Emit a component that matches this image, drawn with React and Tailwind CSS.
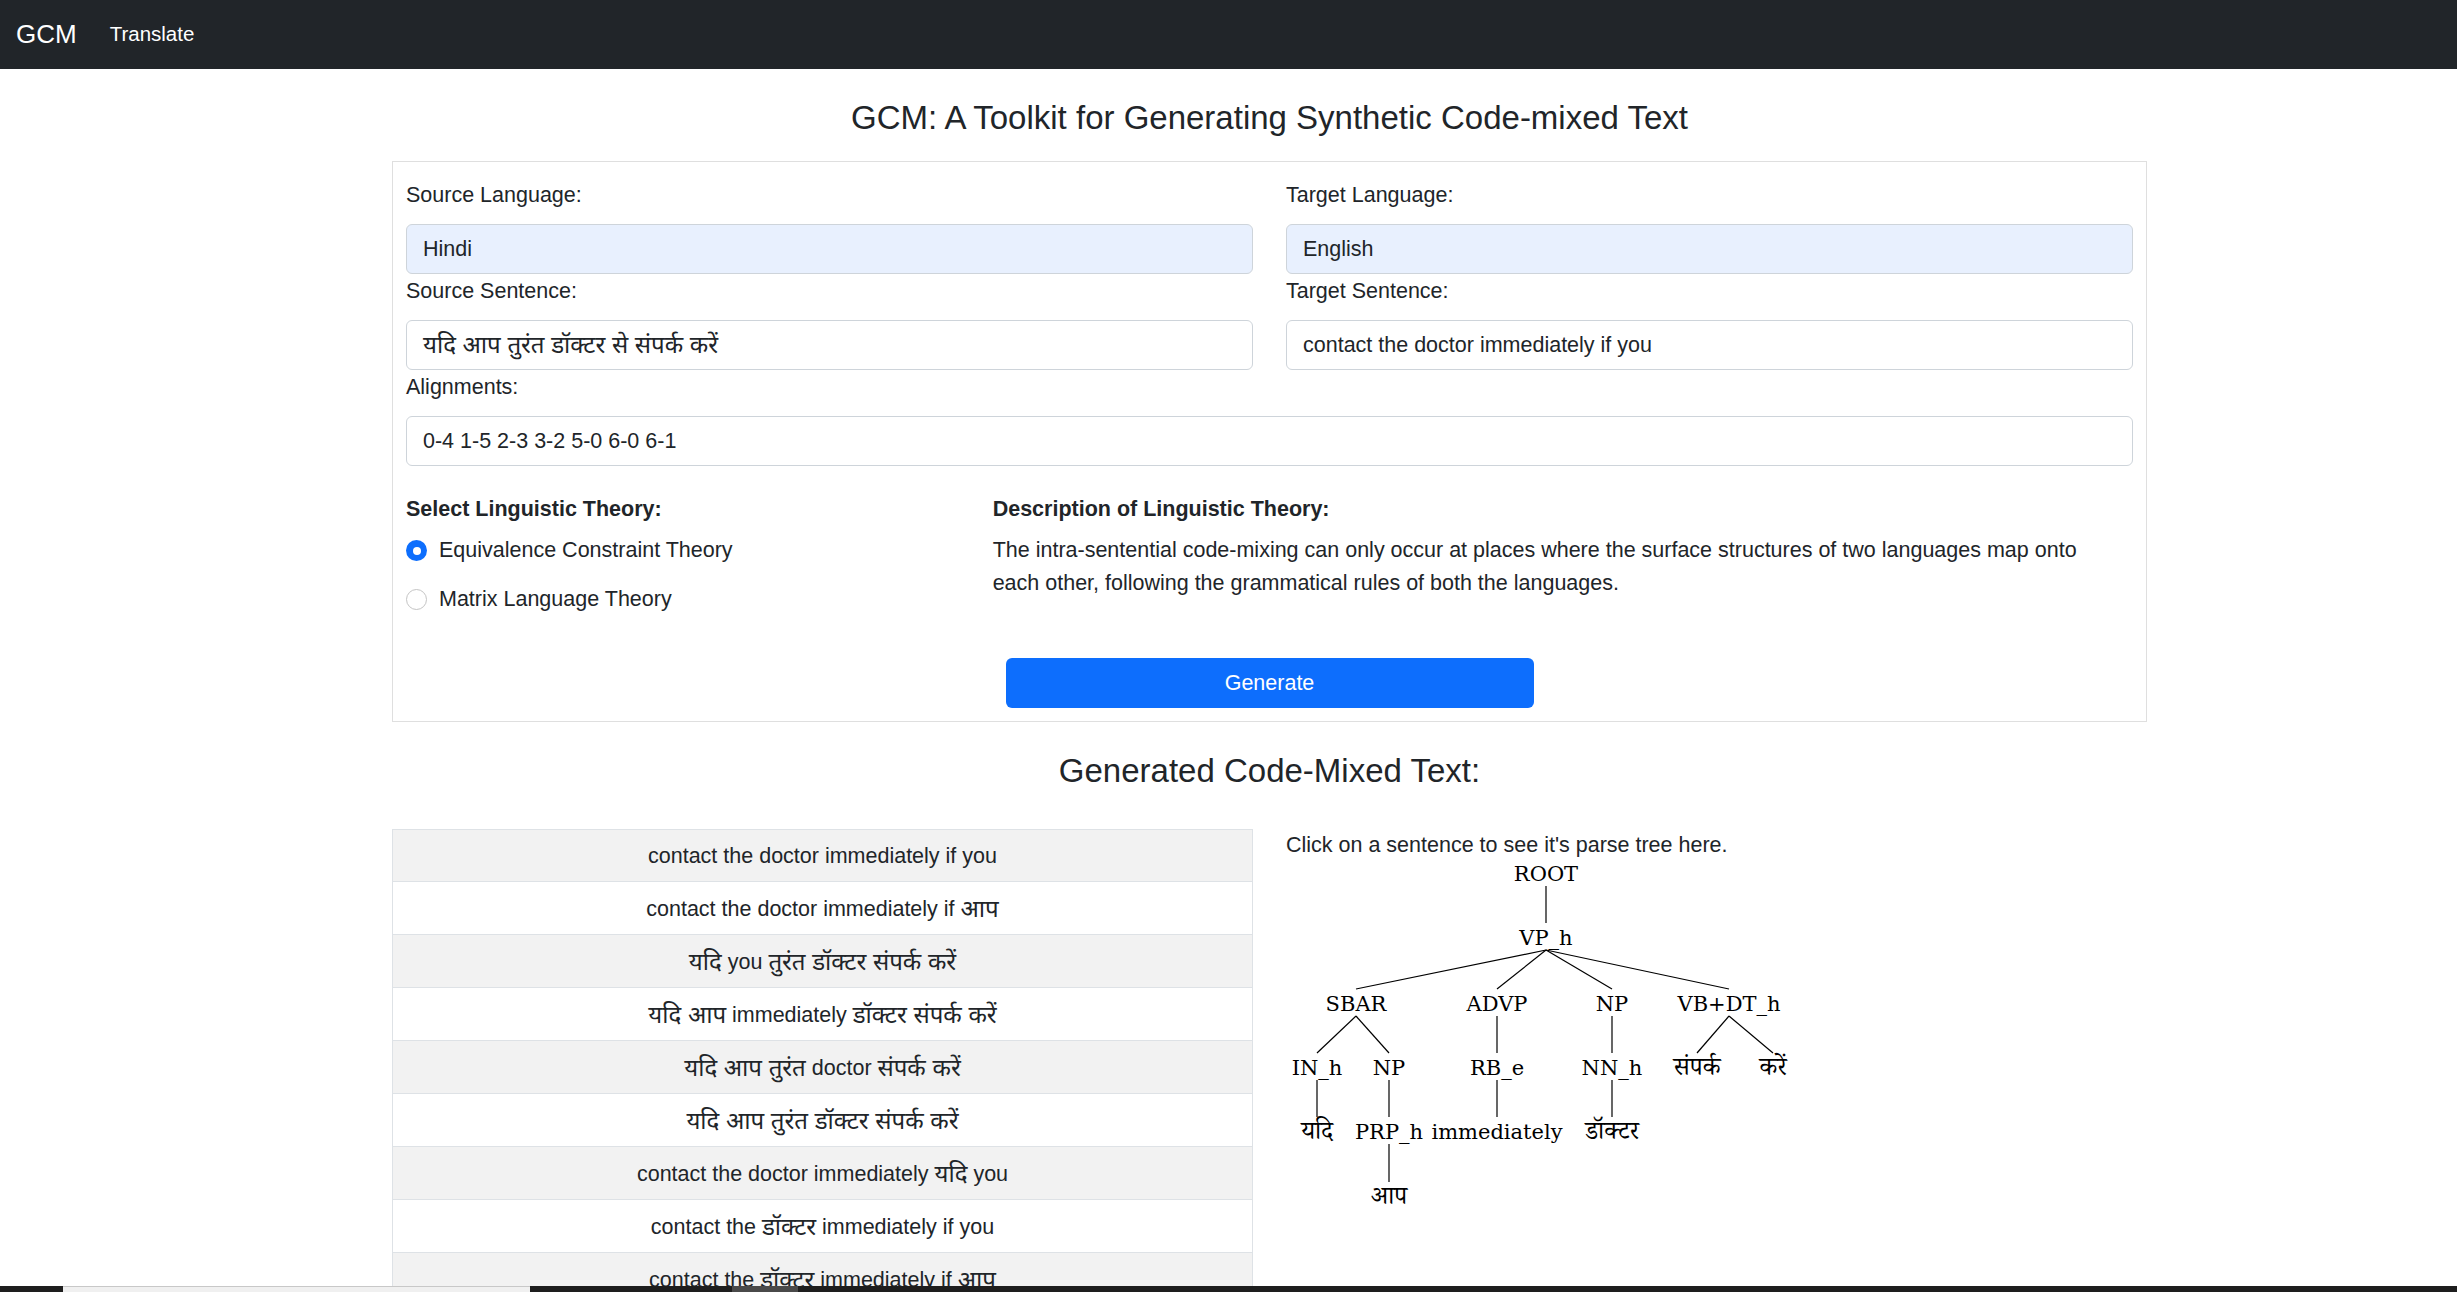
import React from "react";

const FONT = { fontFamily: '"Liberation Sans", "Noto Sans Devanagari", "Lohit Devanagari", "FreeSans", sans-serif' };
const SERIF = '"DejaVu Serif", "Noto Serif Devanagari", "Noto Sans Devanagari", "Lohit Devanagari", serif';

const DEV = /([\u0900-\u097F]+(?:\s+[\u0900-\u097F]+)*)/;

function Mixed({ text }) {
  const parts = text.split(DEV);
  return (
    <>
      {parts.map((p, i) =>
        DEV.test(p) ? (
          <span key={i} className="text-[24px]">
            {p}
          </span>
        ) : (
          <React.Fragment key={i}>{p}</React.Fragment>
        )
      )}
    </>
  );
}

const rows = [
  "contact the doctor immediately if you",
  "contact the doctor immediately if आप",
  "यदि you तुरंत डॉक्टर संपर्क करें",
  "यदि आप immediately डॉक्टर संपर्क करें",
  "यदि आप तुरंत doctor संपर्क करें",
  "यदि आप तुरंत डॉक्टर संपर्क करें",
  "contact the doctor immediately यदि you",
  "contact the डॉक्टर immediately if you",
  "contact the डॉक्टर immediately if आप",
  "contact the डॉक्टर immediately यदि you",
  "यदि you immediately डॉक्टर संपर्क करें",
];

function Field({ label, value, blue, full }) {
  return (
    <div className={full ? "col-span-2" : ""}>
      <div className="leading-[34px] mb-[12px]">{label}</div>
      <div
        className={`h-[50px] rounded-[6px] border border-[#ced4da] px-[16px] flex items-center whitespace-pre ${
          blue ? "bg-[#e8f0fe]" : "bg-white"
        }`}
      >
        <Mixed text={value} />
      </div>
    </div>
  );
}

function Tree() {
  const nodes = [
    ["ROOT", 260, 12],
    ["VP_h", 260, 76],
    ["SBAR", 70, 142],
    ["ADVP", 211, 142],
    ["NP", 326, 142],
    ["VB+DT_h", 443, 142],
    ["IN_h", 31, 206],
    ["NP", 103, 206],
    ["RB_e", 211, 206],
    ["NN_h", 326, 206],
    ["संपर्क", 411, 206, true],
    ["करें", 487, 206, true],
    ["यदि", 31, 270, true],
    ["PRP_h", 103, 270],
    ["immediately", 211, 270],
    ["डॉक्टर", 326, 270, true],
    ["आप", 103, 335, true],
  ];
  const edges = [
    [260, 12, 260, 76],
    [260, 76, 70, 142],
    [260, 76, 211, 142],
    [260, 76, 326, 142],
    [260, 76, 443, 142],
    [70, 142, 31, 206],
    [70, 142, 103, 206],
    [211, 142, 211, 206],
    [326, 142, 326, 206],
    [443, 142, 411, 206],
    [443, 142, 487, 206],
    [31, 206, 31, 270],
    [103, 206, 103, 270],
    [211, 206, 211, 270],
    [326, 206, 326, 270],
    [103, 270, 103, 335],
  ];
  return (
    <svg width="600" height="360" viewBox="0 0 600 360">
      {edges.map(([x1, y1, x2, y2], i) => (
        <line key={i} x1={x1} y1={y1 + 13} x2={x2} y2={y2 - 14} stroke="#000" strokeWidth="1.2" />
      ))}
      {nodes.map(([t, x, y, dev], i) => (
        <text
          key={i}
          x={x}
          y={y + 8}
          textAnchor="middle"
          fontSize={dev ? "25" : "21"}
          fill="#000"
          style={{ fontFamily: SERIF }}
        >
          {t}
        </text>
      ))}
    </svg>
  );
}

export default function App() {
  return (
    <div className="h-[1292px] overflow-hidden flex flex-col bg-white text-[#212529] text-[21.5px]" style={FONT}>
      <nav className="h-[69px] shrink-0 bg-[#212529] flex items-center">
        <span className="ml-[16px] text-[26px] text-white">GCM</span>
        <span className="ml-[33px] text-[20.5px] text-white">Translate</span>
      </nav>

      <main className="flex-1 min-h-0 overflow-hidden">
        <div className="ml-[392px] w-[1755px]">
          <h3 className="mt-[27px] text-center text-[33px] leading-[44px] font-medium">
            GCM: A Toolkit for Generating Synthetic Code-mixed Text
          </h3>

          <div className="mt-[21px] border border-[#dfdfdf] px-[13px] pt-[16px] pb-[13px]">
            <div className="grid grid-cols-2 gap-x-[33px]">
              <Field label="Source Language:" value="Hindi" blue />
              <Field label="Target Language:" value="English" blue />
              <Field label="Source Sentence:" value="यदि आप तुरंत डॉक्टर से संपर्क करें" />
              <Field label="Target Sentence:" value="contact the doctor immediately if you" />
              <Field label="Alignments:" value="0-4 1-5 2-3 3-2 5-0 6-0 6-1" full />
            </div>

            <div className="grid grid-cols-3 gap-x-[33px] mt-[26px]">
              <div>
                <div className="leading-[34px] font-semibold">Select Linguistic Theory:</div>
                <div className="mt-[8px] flex items-center h-[33px]">
                  <span className="w-[21px] h-[21px] rounded-full bg-[#0d6efd] flex items-center justify-center">
                    <span className="w-[8px] h-[8px] rounded-full bg-white" />
                  </span>
                  <span className="ml-[12px]">Equivalence Constraint Theory</span>
                </div>
                <div className="mt-[16px] flex items-center h-[33px]">
                  <span className="w-[21px] h-[21px] rounded-full border border-[#c4c4c4] bg-white" />
                  <span className="ml-[12px]">Matrix Language Theory</span>
                </div>
              </div>
              <div className="col-span-2">
                <div className="leading-[34px] font-semibold">Description of Linguistic Theory:</div>
                <p className="mt-[8px] leading-[33px] max-w-[1105px]">
                  The intra-sentential code-mixing can only occur at places where the surface structures of two languages map onto each other, following the grammatical rules of both the languages.
                </p>
              </div>
            </div>

            <div className="mt-[42px] flex justify-center">
              <button className="w-[528px] h-[50px] rounded-[6px] bg-[#0d6efd] text-white text-[21.5px]">
                Generate
              </button>
            </div>
          </div>

          <h3 className="mt-[27px] text-center text-[33px] leading-[44px] font-medium">
            Generated Code-Mixed Text:
          </h3>

          <div className="mt-[36px] grid grid-cols-2 gap-x-[33px]">
            <div>
              {rows.map((r, i) => (
                <div
                  key={i}
                  className={`h-[53px] pt-[2px] flex items-center justify-center whitespace-pre border-x border-b border-[#dee2e6] ${
                    i === 0 ? "border-t" : ""
                  } ${i % 2 === 0 ? "bg-[#f2f2f2]" : "bg-white"}`}
                >
                  <Mixed text={r} />
                </div>
              ))}
            </div>
            <div>
              <div className="leading-[32px]">Click on a sentence to see it's parse tree here.</div>
              <Tree />
            </div>
          </div>
        </div>
      </main>

      <div className="h-[6px] shrink-0 flex bg-[#1e1e1e]">
        <div className="w-[63px]" />
        <div className="w-[467px] bg-[#f0f0f0] border-t border-[#c8c8c8]" />
        <div className="w-[202px]" />
        <div className="w-[66px] bg-[#4a4a4a]" />
      </div>
    </div>
  );
}
